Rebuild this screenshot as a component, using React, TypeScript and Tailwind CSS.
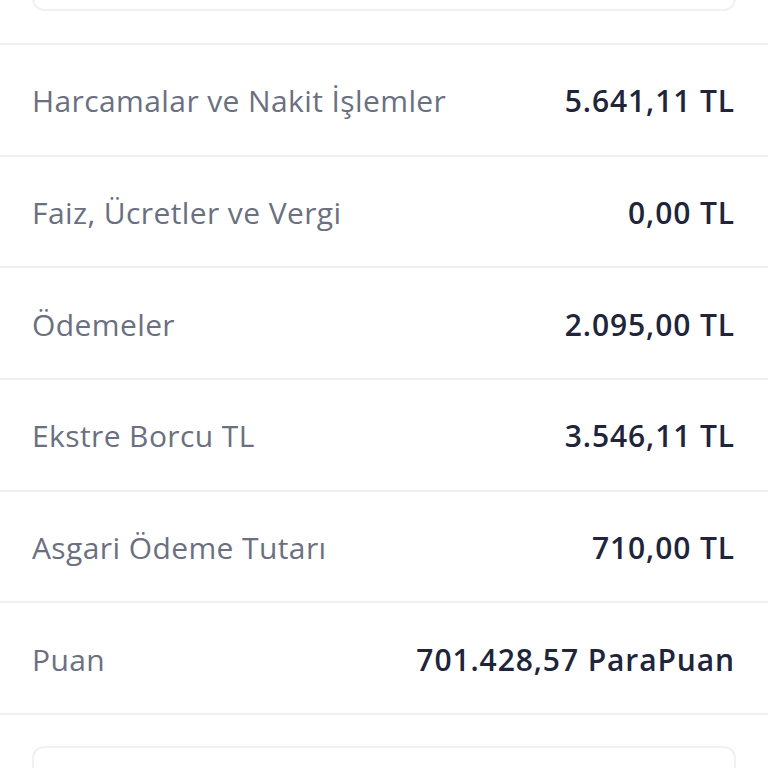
const rows = [
  { label: "Harcamalar ve Nakit İşlemler", value: "5.641,11 TL" },
  { label: "Faiz, Ücretler ve Vergi", value: "0,00 TL" },
  { label: "Ödemeler", value: "2.095,00 TL" },
  { label: "Ekstre Borcu TL", value: "3.546,11 TL" },
  { label: "Asgari Ödeme Tutarı", value: "710,00 TL" },
  { label: "Puan", value: "701.428,57 ParaPuan" },
];

export default function App() {
  return (
    <div className="w-[768px] h-[768px] overflow-hidden bg-white font-['Open_Sans',sans-serif]">
      <div className="-mt-[60px] mx-[32px] h-[71px] rounded-xl border-2 border-[#f1f1f1] bg-white" />
      <div className="mt-[32px] border-t-2 border-[#f0f0f0]">
        {rows.map((r) => (
          <div
            key={r.label}
            className="flex h-[111.7px] items-center justify-between border-b-2 border-[#f0f0f0] pl-[32px] pr-[33px] pt-[2px]"
          >
            <span className="text-[30px] tracking-[0.4px] text-[#6b7080]">{r.label}</span>
            <span className="text-[30px] tracking-[0.9px] font-semibold text-[#20253a]">{r.value}</span>
          </div>
        ))}
      </div>
      <div className="mt-[31px] mx-[32px] h-[80px] rounded-xl border-2 border-[#f1f1f1] bg-white" />
    </div>
  );
}
